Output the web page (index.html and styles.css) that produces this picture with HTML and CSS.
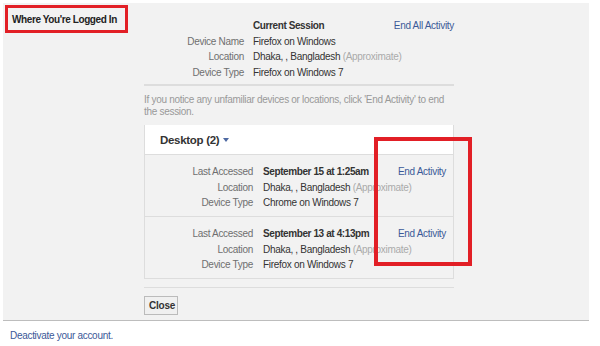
FILE: index.html
```html
<!DOCTYPE html>
<html lang="en">
<head>
    <meta charset="UTF-8">
    <title>Where You're Logged In</title>
    <link rel="stylesheet" href="styles.css">
</head>
<body>
    <div class="panel">
        <div class="panel-title"><span class="marked">Where You're Logged In</span></div>
        <div class="panel-body">
            <div class="info-grid current">
                <span class="label"></span><strong>Current Session</strong><a href="#" class="link">End All Activity</a>
                <span class="label">Device Name</span><span class="value">Firefox on Windows</span>
                <span class="label">Location</span><span class="value">Dhaka, , Bangladesh <em class="muted">(Approximate)</em></span>
                <span class="label">Device Type</span><span class="value">Firefox on Windows 7</span>
            </div>
            <p class="notice">If you notice any unfamiliar devices or locations, click 'End Activity' to end the session.</p>

            <div class="sessions">
                <div class="sessions-head">Desktop (2) <span class="caret"></span></div>
                <div class="info-grid session">
                    <span class="label">Last Accessed</span><strong>September 15 at 1:25am</strong><a href="#" class="link">End Activity</a>
                    <span class="label">Location</span><span class="value">Dhaka, , Bangladesh <em class="muted">(Approximate)</em></span>
                    <span class="label">Device Type</span><span class="value">Chrome on Windows 7</span>
                </div>
                <div class="info-grid session">
                    <span class="label">Last Accessed</span><strong>September 13 at 4:13pm</strong><a href="#" class="link">End Activity</a>
                    <span class="label">Location</span><span class="value">Dhaka, , Bangladesh <em class="muted">(Approximate)</em></span>
                    <span class="label">Device Type</span><span class="value">Firefox on Windows 7</span>
                </div>
            </div>

            <div class="actions">
                <button type="button" class="button">Close</button>
            </div>
        </div>
        <div class="highlight"></div>
    </div>
    <a href="#" class="deactivate">Deactivate your account.</a>
</body>
</html>
```

FILE: styles.css
```css
body {
    margin: 0;
    font-family: "Liberation Sans", Arial, sans-serif;
    font-size: 10px;
    letter-spacing: -0.3px;
    color: #333;
    background: #fff;
}
strong {
    letter-spacing: -0.4px;
}
.panel {
    position: relative;
    display: flex;
    margin: 3px 11px 0 3px;
    height: 318px;
    box-sizing: border-box;
    background: #f2f2f2;
    border-bottom: 1px solid #bdbdbd;
}
.panel-title {
    width: 141px;
    flex-shrink: 0;
}
.marked {
    display: inline-block;
    margin: 2px 0 0 2px;
    padding: 7px 4px 5px 4px;
    width: 109px;
    height: 10px;
    line-height: 10px;
    border: 3px solid #e21f26;
    font-weight: bold;
    letter-spacing: -0.4px;
    color: #222;
    white-space: nowrap;
}
.panel-body {
    width: 310px;
    padding-top: 15px;
}

/* label / value / link rows */
.info-grid {
    display: grid;
    grid-template-columns: 100px 1fr auto;
    column-gap: 9px;
    line-height: 15.5px;
    white-space: nowrap;
}
.info-grid .value {
    grid-column: 2 / 4;
}
.label {
    text-align: right;
    color: #6f6f6f;
}
.muted {
    font-style: normal;
    color: #aaa;
}
.link {
    color: #3b5998;
    text-decoration: none;
    white-space: nowrap;
}
.current {
    padding-bottom: 4px;
    border-bottom: 2px solid #ddd;
}
.notice {
    margin: 8px 0 0;
    color: #999;
    line-height: 12px;
}
.sessions {
    margin-top: 7px;
    border: 1px solid #ddd;
    border-top: none;
}
.sessions-head {
    background: #fff;
    height: 29px;
    padding-left: 15px;
    line-height: 30px;
    font-size: 11.5px;
    font-weight: bold;
    letter-spacing: -0.3px;
    color: #333;
    border-bottom: 1px solid #ddd;
}
.caret {
    display: inline-block;
    margin-left: 1px;
    vertical-align: 2px;
    border-left: 3.5px solid transparent;
    border-right: 3.5px solid transparent;
    border-top: 4px solid #4e69a2;
}
.session {
    grid-template-columns: 108px 1fr auto;
    column-gap: 10px;
    align-content: start;
    padding: 9px 7px 0 0;
    height: 52px;
}
.session + .session {
    border-top: 1px solid #ddd;
}
.actions {
    margin-top: 8px;
    padding-top: 8px;
    border-top: 1px solid #ddd;
}
.button {
    font-family: inherit;
    font-size: 10px;
    font-weight: bold;
    letter-spacing: -0.2px;
    color: #333;
    background: #f0f0f0;
    border: 1px solid #bbb;
    padding: 2px 4px;
    width: 34px;
    height: 19px;
    line-height: 13px;
}
.highlight {
    position: absolute;
    left: 371px;
    top: 134px;
    width: 90px;
    height: 121px;
    border: 4px solid #e21f26;
}
.deactivate {
    display: block;
    margin: 9px 0 0 10px;
    color: #3b5998;
    text-decoration: none;
}
```
